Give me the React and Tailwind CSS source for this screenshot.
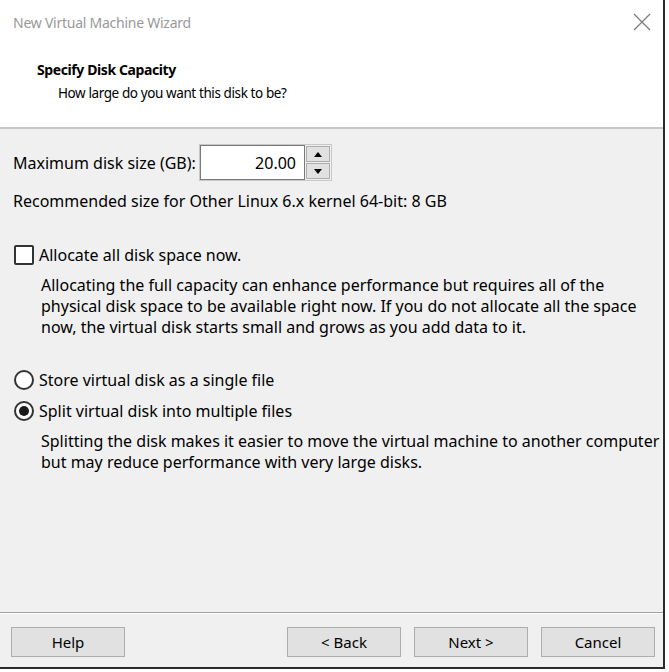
// App.jsx
const font = { fontFamily: '"Noto Sans", "Open Sans", sans-serif' };

function Radio({ checked }) {
  return (
    <span className="w-[20px] h-[20px] rounded-full border-2 border-[#333] bg-white flex items-center justify-center shrink-0">
      {checked && <span className="w-[10px] h-[10px] rounded-full bg-[#1a1a1a]" />}
    </span>
  );
}

function Btn({ children }) {
  return (
    <button className="w-[114px] h-[30px] bg-[#e1e1e1] border border-[#adadad] text-[15px] text-black flex items-center justify-center">
      {children}
    </button>
  );
}

export default function App() {
  return (
    <div className="w-[669px] h-[672px] bg-white" style={font}>
      <div className="w-[665px] h-[669px] border-r-2 border-b-2 border-[#2a2a2a] flex flex-col bg-[#f0f0f0]">
        {/* title bar + header */}
        <div className="bg-white">
          <div className="h-[44px] flex items-center justify-between pl-[13px] pr-[12px]">
            <span className="text-[14px] tracking-[-0.25px] text-[#999]">New Virtual Machine Wizard</span>
            <svg width="18" height="18" viewBox="0 0 18 18">
              <path d="M1 1 L17 17 M17 1 L1 17" stroke="#7a7a7a" strokeWidth="1.2" fill="none" />
            </svg>
          </div>
          <div className="pt-[13px] pb-[22px] pl-[37px]">
            <div className="h-[24px] flex items-center text-[14px] tracking-[-0.4px] font-bold text-black">Specify Disk Capacity</div>
            <div className="h-[24px] flex items-center pl-[21px] text-[13.5px] tracking-[-0.4px] text-black">How large do you want this disk to be?</div>
          </div>
        </div>
        <div className="h-[2px] bg-[#c6c6c6]" />

        {/* body */}
        <div className="flex-1 flex flex-col pl-[13px] pt-[15px] text-[16px] text-black">
          <div className="flex items-center h-[37px]">
            <span className="w-[186px]">Maximum disk size (GB):</span>
            <div className="flex items-stretch h-[37px] border border-[#c8c8c8]">
              <div className="w-[105px] bg-white border border-[#7a7a7a] flex items-center justify-end pr-[8px]">20.00</div>
              <div className="w-[26px] flex flex-col gap-[1px] p-[1px]">
                <div className="flex-1 bg-[#e1e1e1] border border-[#adadad] flex items-center justify-center">
                  <svg width="8" height="5" viewBox="0 0 8 5"><path d="M0 5 L4 0 L8 5 Z" fill="#000" /></svg>
                </div>
                <div className="flex-1 bg-[#e1e1e1] border border-[#adadad] flex items-center justify-center">
                  <svg width="8" height="5" viewBox="0 0 8 5"><path d="M0 0 L4 5 L8 0 Z" fill="#000" /></svg>
                </div>
              </div>
            </div>
          </div>
          <div className="mt-[10px] leading-[21px]">Recommended size for Other Linux 6.x kernel 64-bit: 8 GB</div>

          <div className="mt-[33px] flex items-center gap-[5px] pl-[1px] h-[20px]">
            <span className="w-[20px] h-[20px] border-2 border-[#333] bg-white rounded-[2px] shrink-0" />
            <span>Allocate all disk space now.</span>
          </div>
          <div className="mt-[10px] pl-[28px] leading-[21px]">
            Allocating the full capacity can enhance performance but requires all of the<br />
            physical disk space to be available right now. If you do not allocate all the space<br />
            now, the virtual disk starts small and grows as you add data to it.
          </div>

          <div className="mt-[32px] flex items-center gap-[5px] pl-[1px] h-[20px]">
            <Radio />
            <span>Store virtual disk as a single file</span>
          </div>
          <div className="mt-[11px] flex items-center gap-[5px] pl-[1px] h-[20px]">
            <Radio checked />
            <span>Split virtual disk into multiple files</span>
          </div>
          <div className="mt-[10px] pl-[28px] leading-[21px]">
            Splitting the disk makes it easier to move the virtual machine to another computer<br />
            but may reduce performance with very large disks.
          </div>
        </div>

        {/* footer */}
        <div className="h-[1px] bg-[#a0a0a0]" />
        <div className="h-[1px] bg-white" />
        <div className="h-[53px] flex items-start pt-[13px] pl-[11px]">
          <Btn>Help</Btn>
          <div className="flex-1" />
          <div className="flex gap-[13px] pr-[8px]">
            <Btn>&lt; Back</Btn>
            <Btn>Next &gt;</Btn>
            <Btn>Cancel</Btn>
          </div>
        </div>
      </div>
    </div>
  );
}
